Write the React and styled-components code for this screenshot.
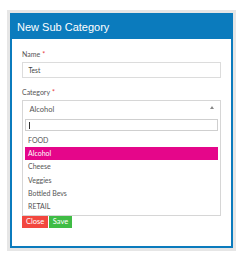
import React from "react";
import styled, { createGlobalStyle } from "styled-components";

const Global = createGlobalStyle`
  html, body { margin: 0; padding: 0; background: #ffffff; }
  * { box-sizing: border-box; }
`;

const BLUE = "#0b7bbd";

const Frame = styled.div`
  margin: 10px 0 0 7px;
  width: 229px;
  height: 241px;
  border: 3px solid #e6e6e6;
  background: #ececec;
`;

const Modal = styled.div`
  height: 100%;
  border: 2px solid ${BLUE};
  background: #fff;
  display: flex;
  flex-direction: column;
`;

const Header = styled.div`
  height: 24px;
  background: ${BLUE};
  color: #fff;
  font-family: "Liberation Sans", Arial, sans-serif;
  font-size: 11px;
  line-height: 24px;
  padding-left: 5px;
  margin-top: -0.5px;
`;

const Body = styled.div`
  padding: 11px 10px 0 10px;
  font-family: Lato, "Open Sans", sans-serif;
  color: #555;
`;

const Label = styled.div`
  font-size: 7px;
  line-height: 9px;
  color: #555;
  margin-bottom: ${(p) => p.$mb || 3}px;
`;

const Req = styled.span`
  color: #e8383d;
  margin-left: 2px;
`;

const TextInput = styled.div`
  height: 16px;
  width: 199px;
  border: 1px solid #dcdcdc;
  font-size: 6.6px;
  line-height: 14px;
  padding-left: 5.5px;
  color: #444;
  margin-bottom: 10.5px;
`;

const Select = styled.div`
  width: 199px;
  border: 1px solid #d6d6d6;
  padding: 0 2px 1px 2px;
`;

const Current = styled.div`
  height: 18px;
  display: flex;
  align-items: center;
  justify-content: space-between;
  padding: 0 4px 1px 4.5px;
  font-size: 7.5px;
  color: #555;
`;

const Arrow = styled.svg`
  width: 4px;
  height: 3px;
  margin-top: -3px;
`;

const Search = styled.div`
  height: 12px;
  border: 1px solid #cfcfcf;
  position: relative;
  &::after {
    content: "";
    position: absolute;
    left: 2.5px;
    top: 2px;
    width: 1px;
    height: 7px;
    background: #333;
  }
`;

const List = styled.div`
  margin-top: 3px;
  display: flex;
  flex-direction: column;
`;

const Item = styled.div`
  height: 13.35px;
  line-height: 13.35px;
  font-size: 7px;
  padding-left: 3px;
  color: ${(p) => (p.$active ? "#fff" : "#555")};
  background: ${(p) => (p.$active ? "#e5068a" : "transparent")};
`;

const Buttons = styled.div`
  display: flex;
  gap: 1px;
`;

const Button = styled.div`
  height: 12px;
  line-height: 12px;
  font-size: 7.5px;
  color: #fff;
  background: ${(p) => p.$bg};
  width: ${(p) => p.$w}px;
  text-align: center;
`;

const items = ["FOOD", "Alcohol", "Cheese", "Veggies", "Bottled Bevs", "RETAIL"];

export default function App() {
  return (
    <>
      <Global />
      <Frame>
        <Modal>
          <Header>New Sub Category</Header>
          <Body>
            <Label>
              Name<Req>*</Req>
            </Label>
            <TextInput>Test</TextInput>
            <Label $mb={2.5}>
              Category<Req>*</Req>
            </Label>
            <Select>
              <Current>
                <span>Alcohol</span>
                <Arrow viewBox="0 0 4 3">
                  <path d="M2 0 L4 3 L0 3 Z" fill="#888" />
                </Arrow>
              </Current>
              <Search />
              <List>
                {items.map((it) => (
                  <Item key={it} $active={it === "Alcohol"}>
                    {it}
                  </Item>
                ))}
              </List>
            </Select>
            <Buttons>
              <Button $bg="#f2473f" $w={26}>Close</Button>
              <Button $bg="#3fbc45" $w={23}>Save</Button>
            </Buttons>
          </Body>
        </Modal>
      </Frame>
    </>
  );
}
